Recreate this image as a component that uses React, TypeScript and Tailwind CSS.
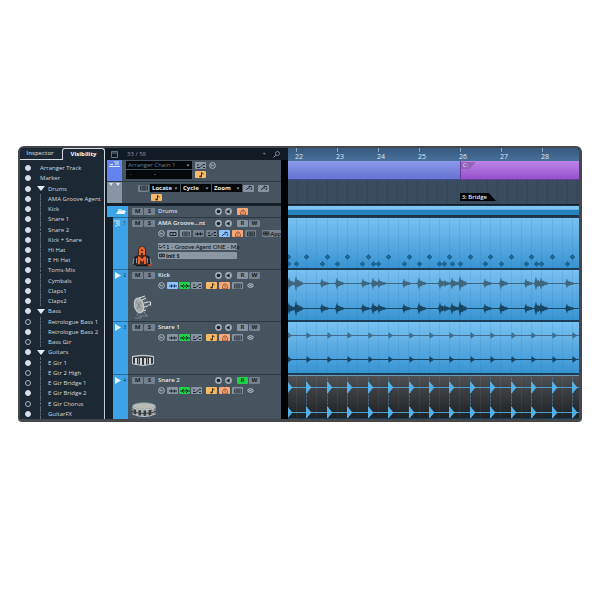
import React, { useState } from "react";

type GlyphName = "wave" | "arrows" | "note" | "drum" | "lanes" | "mix" | "link" | "pencil";

interface TreeItem {
  name: string;
  level: number;
  on: boolean;
  folder?: boolean;
}

const TREE: TreeItem[] = [
  { name: "Arranger Track", level: 0, on: true },
  { name: "Marker", level: 0, on: true },
  { name: "Drums", level: 0, on: true, folder: true },
  { name: "AMA Groove Agent", level: 1, on: true },
  { name: "Kick", level: 1, on: true },
  { name: "Snare 1", level: 1, on: true },
  { name: "Snare 2", level: 1, on: true },
  { name: "Kick + Snare", level: 1, on: true },
  { name: "Hi Hat", level: 1, on: true },
  { name: "E Hi Hat", level: 1, on: true },
  { name: "Toms-Mix", level: 1, on: true },
  { name: "Cymbals", level: 1, on: true },
  { name: "Claps1", level: 1, on: true },
  { name: "Claps2", level: 1, on: true },
  { name: "Bass", level: 0, on: true, folder: true },
  { name: "Retrologue Bass 1", level: 1, on: false },
  { name: "Retrologue Bass 2", level: 1, on: true },
  { name: "Bass Gtr", level: 1, on: false },
  { name: "Guitars", level: 0, on: true, folder: true },
  { name: "E Gtr 1", level: 1, on: true },
  { name: "E Gtr 2 High", level: 1, on: false },
  { name: "E Gtr Bridge 1", level: 1, on: false },
  { name: "E Gtr Bridge 2", level: 1, on: true },
  { name: "E Gtr Chorus", level: 1, on: false },
  { name: "GuitarFX", level: 1, on: true },
];

const BARS = [22, 23, 24, 25, 26, 27, 28];

const BEATS = [8, 18, 28, 39, 49, 59, 69, 80, 90, 100, 110, 120, 131, 141, 151, 161, 171, 182, 192, 202, 212, 223, 233, 243, 253, 264, 274, 284];

const SNARE_HITS = [0, 19, 40, 60, 81, 101, 122, 142, 162, 183, 203, 224, 244, 265, 285];
const SNARE_NOTES = [0, 18, 39, 59, 80, 100, 121, 141, 161, 182, 202, 223, 243, 264, 284];
const KICK_NOTES = [0, 8, 34, 49, 74, 85, 90, 116, 131, 151, 156, 164, 172, 197, 213, 238, 248, 253, 279];

// [x, peak]
const KICK_HITS = [
  [1, 6], [8, 8], [34, 5], [49, 6], [75, 5], [85, 6], [91, 5], [116, 5], [131, 6], [152, 6],
  [157, 4], [164, 6], [172, 8], [197, 5], [213, 6], [238, 5], [248, 7], [253, 6], [279, 5],
];

// [offset, share of the peak]
const KICK_SHAPE = [[-2, 0], [-1, 0.45], [0, 1], [1, 0.4], [2, 0.5], [4, 0.25], [5, 0.28], [8, 0]];

function Glyph({ name, small = false }: { name: GlyphName; small?: boolean }) {
  return (
    <svg
      viewBox="0 0 10 6"
      className={`shrink-0 ${small ? "h-[5px] w-[8px]" : "h-[6px] w-[10px]"}`}
      fill="none"
      stroke="currentColor"
      strokeWidth="1"
    >
      {name === "wave" && <path d="M1 3h2M7 3h2M3.5 1.5v3M5 2v2M6.5 1.5v3" />}
      {name === "arrows" && <path d="M0 3h10M4 1 2 3l2 2M6 1l2 2-2 2" />}
      {name === "note" && (
        <>
          <path d="M5.5 4.5V.5l2 1.5" />
          <ellipse cx="4.5" cy="4.5" rx="1.3" ry="1" fill="currentColor" stroke="none" />
        </>
      )}
      {name === "drum" && <path d="M2 5.3h6M2.5 5V3.500L4 1h2l1.500 2.500V5M4 3h2" strokeWidth=".8" />}
      {name === "lanes" && <path d="M1.5 1h7v4h-7zM4 1v4M6 1v4M1.5 3h7" strokeWidth=".7" />}
      {name === "mix" && <path d="M1 4.5h3l3-3h2M1 2h2M7 4.5h2" />}
      {name === "link" && <path d="M2 1.5h6v3H2zM4 3h2" />}
      {name === "pencil" && <path d="M2 5 4 3M5 4V1l3 1M7 5l1-2" />}
    </svg>
  );
}

const TONES = {
  gray: "bg-[#8793a0] text-[#1c2630]",
  dim: "bg-[#75818d] text-[#141d26]",
  green: "bg-[#1fd04a] text-[#073d16]",
  blue: "bg-[#8fc2fb] text-[#1c3a66]",
  orange: "bg-[#f6b968] text-[#47300c]",
  salmon: "bg-[#f6a878] text-[#8a4a2a]",
};

interface KeyProps {
  label: string;
  tone?: keyof typeof TONES;
  children: React.ReactNode;
}

function Key({ label, tone = "gray", children }: KeyProps) {
  return (
    <button
      type="button"
      aria-label={label}
      className={`flex h-[7px] w-[11px] shrink-0 items-center justify-center overflow-hidden rounded-[1px] text-[6px] leading-[7px] font-bold ${TONES[tone]}`}
    >
      {children}
    </button>
  );
}

function Knob({ label, kind }: { label: string; kind: "rec" | "mon" | "edit" }) {
  return (
    <button type="button" aria-label={label} className="shrink-0">
      <svg viewBox="0 0 7 7" className="size-[7px]">
        {kind === "edit" ? (
          <g fill="none" stroke="#c3ccd4" strokeWidth=".8">
            <circle cx="3.5" cy="3.5" r="2.9" />
            <path d="M2.2 2.2v1.6h2.2l1-1.2" />
          </g>
        ) : (
          <>
            <circle cx="3.5" cy="3.5" r="3.4" fill="#a3adb7" />
            {kind === "rec" ? (
              <circle cx="3.5" cy="3.5" r="1.8" fill="#18212a" />
            ) : (
              <path d="M1.6 2.8h1.2L4.6 1.2v4.6L2.8 4.4H1.6z" fill="#18212a" />
            )}
          </>
        )}
      </svg>
    </button>
  );
}

interface ComboProps {
  label: string;
  value: string;
  className: string;
}

function Combo({ label, value, className }: ComboProps) {
  return (
    <span className={`flex h-[8px] items-center bg-[#05080b] pr-[2px] ${className}`}>
      <select aria-label={label} className="h-[8px] min-w-0 flex-1 appearance-none bg-transparent pl-[2px] leading-[8px] outline-none">
        <option>{value}</option>
      </select>
      <svg viewBox="0 0 4 3" className="h-[3px] w-[4px] shrink-0">
        <path d="M.5 .5h3L2 2.5z" fill="#9aa5af" />
      </svg>
    </span>
  );
}

function Tree() {
  const [items, setItems] = useState(TREE);

  const toggle = (index: number) => {
    setItems(items.map((item, i) => (i === index ? { ...item, on: !item.on } : item)));
  };

  return (
    <aside className="flex w-[85px] shrink-0 flex-col bg-[#1c2934]">
      <div role="tablist" className="flex h-[12px] text-[6px] leading-[11px] font-semibold">
        <button type="button" role="tab" aria-selected="false" className="w-[42px] border-b border-[#d5dbe2] pr-[2px] pb-[1px] text-[#b9c3cd]">
          Inspector
        </button>
        <button type="button" role="tab" aria-selected="true" className="flex-1 rounded-t-[3px] border-t border-r border-l border-[#d5dbe2] font-bold text-white">
          Visibility
        </button>
      </div>
      <ul className="flex flex-1 flex-col border-r border-[#c3ccd6] pt-[3px]">
        {items.map((item, i) => (
          <li key={item.name} className="flex flex-1">
            <label className="flex flex-1 items-center pl-[5px]">
              <input
                type="checkbox"
                checked={item.on}
                onChange={() => toggle(i)}
                className="mr-[9px] size-[6px] shrink-0 appearance-none rounded-full border border-[#aab5c1] checked:border-[#d7deea] checked:bg-[#d7deea]"
              />
              {item.folder && (
                <svg viewBox="0 0 8 5" className="-ml-[3px] mr-[3px] h-[5px] w-[8px]">
                  <path d="M0 0h8L4 5z" fill="#e6ecf2" />
                </svg>
              )}
              {item.level === 1 && <span className="mr-[7px] self-stretch border-l border-dashed border-[#5d6a76]" />}
              <span className="text-[6px] leading-[8px] whitespace-nowrap text-[#d0d8df]">{item.name}</span>
            </label>
          </li>
        ))}
      </ul>
    </aside>
  );
}

function RobotPicture() {
  return (
    <svg viewBox="0 0 20 22" className="h-[22px] w-[20px]">
      <path d="M3 20v-7l3-2M17 20v-7l-3-2" stroke="#1b1f24" strokeWidth="2.500" fill="none" />
      <path d="M1 19l1-6M19 19l-1-6M4.500 13v5M15.500 13v5" stroke="#a9b0b6" strokeWidth=".7" />
      <path d="M6 4q4-6 8 0l1 16H5z" fill="#4a2a20" />
      <path d="M7 10V4q3-4.500 6 0v6h-2V8H9v2zM9 4.500V6h2V4.500z" fill="#f0622a" fillRule="evenodd" />
      <path d="M6 19v-7.500h1.500L10 14l2.500-2.500H14V19h-2v-4l-2 2-2-2v4z" fill="#f0622a" />
      <path d="M4 20.500h12" stroke="#15191d" strokeWidth="1.500" />
      <path d="M16 20h4" stroke="#e8432a" strokeWidth="1.4" />
    </svg>
  );
}

function KickPicture() {
  return (
    <svg viewBox="0 0 20 24" className="h-[24px] w-[20px]">
      <path d="M5 3l8-2q4 3 3 9l-3 8-6 1z" fill="#596066" />
      <path d="M7 3l6-2M10 5l4-2M12 8l4-1M12 12l4-1M11 16l3-1" stroke="#dadddf" strokeWidth="1" />
      <ellipse cx="7" cy="10.500" rx="4.500" ry="7.500" fill="#a6abae" stroke="#c6cacc" strokeWidth="1.2" transform="rotate(-12 7 10.500)" />
      <path d="M4 6l5 8M5 14l4-7" stroke="#7d8589" strokeWidth="1" />
      <path d="M6 18l-1 3M12 17l3 4M7 21h9M3 23h7" stroke="#87919a" strokeWidth=".8" />
      <path d="M16 7h2.500v3H16" stroke="#cfd4d8" strokeWidth="1.2" fill="none" />
    </svg>
  );
}

function SnarePicture({ wide = false }: { wide?: boolean }) {
  return wide ? (
    <svg viewBox="0 0 24 15" className="h-[15px] w-[24px]">
      <path d="M0 4v7q12 6 24 0V4z" fill="#7b7f80" />
      <path d="M3 8v5M8 8v6M13 8v6M18 8v6" stroke="#23282b" strokeWidth="1.500" />
      <path d="M5 7v6M10 8v6M15 8v6M21 7v5" stroke="#d7d9da" strokeWidth="1" />
      <path d="M0 9.500q12 4 24 0" stroke="#383d40" strokeWidth="1" fill="none" />
      <ellipse cx="12" cy="4" rx="11.500" ry="3.300" fill="#b9bbb9" stroke="#8d9191" strokeWidth=".7" />
      <path d="M.5 5.500q11.500 5 23 0M.5 12q11.500 5 23 0" stroke="#c9cccd" strokeWidth="1" fill="none" />
    </svg>
  ) : (
    <svg viewBox="0 0 22 12" className="h-[12px] w-[22px]">
      <path d="M1 2q10-2 20 0v8q-10 3-20 0z" fill="#33383c" />
      <path d="M4 4v6M9 4v7M13 4v7M18 4v6" stroke="#e4e6e7" strokeWidth="1.800" />
      <path d="M6.500 4v6M15.500 4v6" stroke="#8d9397" strokeWidth="1" />
      <path d="M1 2.500q10-2 20 0" stroke="#b9bdc0" strokeWidth="1.500" fill="none" />
      <path d="M1 10q10 3 20 0" stroke="#c9cdcf" strokeWidth="1" fill="none" />
      <path d="M.500 2v8M21.500 2v8" stroke="#c9cdcf" strokeWidth="1" />
    </svg>
  );
}

interface TrackProps {
  name: string;
  num: number;
  height: string;
  picture: React.ReactNode;
  armed?: boolean;
  children: React.ReactNode;
}

function Track({ name, num, height, picture, armed, children }: TrackProps) {
  return (
    <li className={`flex pl-[6px] ${height}`}>
      <div className="flex w-[15px] shrink-0 items-start justify-between border-t border-[#2b6c9c] bg-[#3da3e8] pt-[2px] pr-[2px] pl-[1px]">
        <svg viewBox="0 0 7 7" className="size-[7px]">
          {num === 1 ? (
            <path d="M0 1h6M2 3h4M3 5h3M1 6h2" stroke="#d9effc" strokeWidth="1" />
          ) : (
            <path d="M1 0 7 3.5 1 7z" fill="#e3f3fd" />
          )}
        </svg>
        <span className="text-[5px] leading-[7px] text-[#123a59]">{num}</span>
      </div>
      <div className="flex min-w-0 flex-1 border-t border-[#2c3843] bg-[#46545f] pt-[2px]">
        <div className="flex w-[30px] shrink-0 flex-col pl-[4px]">
          <div className="flex gap-[1px]">
            <Key label={`Mute ${name}`} tone="dim">M</Key>
            <Key label={`Solo ${name}`} tone="dim">S</Key>
          </div>
          <div className="flex flex-1 items-end pb-[2px]">{picture}</div>
        </div>
        <div className="flex min-w-0 flex-1 flex-col gap-[3px]">
          <div className="flex items-center">
            <span className="w-[57px] text-[6px] leading-[7px] font-semibold whitespace-nowrap text-[#e4eaef]">{name}</span>
            <span className="flex w-[22px] gap-[3px]">
              <Knob label={`Record ${name}`} kind="rec" />
              <Knob label={`Monitor ${name}`} kind="mon" />
            </span>
            <span className="flex gap-[1px]">
              <Key label={`Read ${name}`} tone={armed ? "green" : "gray"}>R</Key>
              <Key label={`Write ${name}`} tone="dim">W</Key>
            </span>
          </div>
          {children}
        </div>
      </div>
    </li>
  );
}

function AudioControls({ first = "gray" }: { first?: keyof typeof TONES }) {
  return (
    <div className="flex gap-[4px]">
      <span className="flex w-[44px] gap-[1px]">
        <span className="w-[8px]">
          <Knob label="Edit channel" kind="edit" />
        </span>
        <Key label="Inserts" tone={first}><Glyph name="wave" /></Key>
        <Key label="Equalizer" tone="green"><Glyph name="arrows" /></Key>
        <Key label="Sends"><Glyph name="mix" /></Key>
      </span>
      <span className="flex gap-[2px]">
        <Key label="Musical mode" tone="orange"><Glyph name="note" /></Key>
        <Key label="Lock" tone="salmon"><Glyph name="drum" /></Key>
        <Key label="Lanes"><Glyph name="lanes" /></Key>
      </span>
      <svg viewBox="0 0 7 7" className="size-[7px]">
        <ellipse cx="3.5" cy="3.5" rx="2.7" ry="1.8" fill="none" stroke="#c3ccd4" />
        <path d="M2.5 3.5h2" stroke="#c3ccd4" />
      </svg>
    </div>
  );
}

function TrackList() {
  return (
    <section className="flex w-[183px] shrink-0 flex-col bg-[#111b24] pl-[2px]">
      <header className="flex h-[12px] items-center pr-[8px] pl-[4px] text-[6px] leading-[8px] text-[#8996a2]">
        <svg viewBox="0 0 7 7" className="mr-[9px] size-[7px]">
          <path d="M.5 .5h6v6h-6zM.5 2h6" fill="none" stroke="#637482" />
        </svg>
        <span className="flex-1">33 / 58</span>
        <button type="button" aria-label="Add track" className="mr-[7px]">+</button>
        <button type="button" aria-label="Find track">
          <svg viewBox="0 0 7 7" className="size-[7px]">
            <path d="M3 4 .5 6.500" stroke="#8996a2" />
            <circle cx="4.500" cy="2.500" r="2" fill="none" stroke="#8996a2" strokeWidth=".8" />
          </svg>
        </button>
      </header>

      <div className="flex flex-1 bg-black pr-[7px]">
        <div className="flex min-w-0 flex-1 flex-col bg-[#15202a] text-[6px]">
          <div className="flex h-[21px] bg-[#46545f]">
            <div className="w-[15px] bg-[#6583ee] pt-[1px] pl-[2px]">
              <svg viewBox="0 0 11 6" className="h-[6px] w-[11px]">
                <path d="M0 5.500h11M1 3.500h3M5 1h5M6 3h4" stroke="#dce4ff" strokeWidth="1" />
              </svg>
            </div>
            <div className="flex flex-1 gap-[3px] pt-[1px] pl-[4px]">
              <div className="flex w-[66px] flex-col gap-[1px] text-[#707c86]">
                <Combo label="Arranger chain" value="Arranger Chain 1" className="w-full" />
                <div className="flex h-[9px] bg-[#05080b] pl-[4px] leading-[8px]">
                  <span className="w-[24px]">-</span>
                  <span className="text-[#cdd4da]">-</span>
                </div>
              </div>
              <div className="flex flex-col gap-[2px] pt-[1px]">
                <div className="flex gap-[3px]">
                  <Key label="Arranger mode"><Glyph name="mix" /></Key>
                  <Knob label="Edit arranger" kind="edit" />
                </div>
                <Key label="Time base" tone="orange"><Glyph name="note" /></Key>
              </div>
            </div>
          </div>

          <div className="flex h-[22px] border-t border-[#2c3843] bg-[#46545f]">
            <div className="w-[15px] bg-[#8796a5] pt-[1px] pl-[2px]">
              <svg viewBox="0 0 11 5" className="h-[5px] w-[11px]">
                <path d="M0 0h4L2 3zM7 0h4L9 3z" fill="#dfe6ec" />
              </svg>
            </div>
            <div className="flex flex-1 flex-col gap-[2px] pt-[2px] pl-[16px]">
              <div className="flex items-center gap-[1px] font-bold text-[#e4eaef]">
                <Key label="Add marker" tone="dim"><Glyph name="lanes" /></Key>
                <Combo label="Locate" value="Locate" className="w-[30px]" />
                <Combo label="Cycle" value="Cycle" className="w-[30px]" />
                <Combo label="Zoom" value="Zoom" className="w-[30px]" />
                <span className="flex gap-[4px]">
                  <Key label="Marker in"><Glyph name="pencil" /></Key>
                  <Key label="Marker out"><Glyph name="pencil" /></Key>
                </span>
              </div>
              <div className="pl-[13px]">
                <Key label="Marker time base" tone="orange"><Glyph name="note" /></Key>
              </div>
            </div>
          </div>

          <ul className="mt-[3px] flex flex-col">
            <li className="flex h-[11px]">
              <div className="flex w-[21px] shrink-0 justify-end bg-[#3da3e8] pt-[2px] pr-[2px]">
                <svg viewBox="0 0 10 7" className="h-[7px] w-[10px]">
                  <path d="M2 1h3l1 1h3v4H2z" fill="#a9daf8" />
                  <path d="M0 6l2-3h8L8 6z" fill="#eef8fe" />
                </svg>
              </div>
              <div className="flex flex-1 items-center bg-[#46545f] pl-[4px]">
                <span className="flex w-[26px] gap-[1px]">
                  <Key label="Mute Drums" tone="dim">M</Key>
                  <Key label="Solo Drums" tone="dim">S</Key>
                </span>
                <span className="w-[57px] leading-[7px] font-semibold text-[#bcdcf3]">Drums</span>
                <span className="flex w-[22px] gap-[3px]">
                  <Knob label="Record Drums" kind="rec" />
                  <Knob label="Monitor Drums" kind="mon" />
                </span>
                <Key label="Group editing" tone="salmon"><Glyph name="drum" /></Key>
              </div>
            </li>

            <Track name="AMA Groove...nt" num={1} height="h-[52px]" picture={<RobotPicture />}>
              <div className="flex gap-[2px]">
                <span className="w-[7px]">
                  <Knob label="Edit instrument" kind="edit" />
                </span>
                <Key label="Instrument"><Glyph name="link" /></Key>
                <Key label="Inserts"><Glyph name="lanes" /></Key>
                <Key label="Equalizer" tone="dim"><Glyph name="wave" /></Key>
                <Key label="Sends" tone="dim"><Glyph name="mix" /></Key>
                <Key label="Time base" tone="blue"><Glyph name="pencil" /></Key>
                <Key label="Lock" tone="salmon"><Glyph name="drum" /></Key>
                <Key label="Lanes" tone="dim"><Glyph name="lanes" /></Key>
                <button
                  type="button"
                  className="ml-auto flex h-[7px] items-center rounded-l-[1px] bg-[#75818d] font-['Lato','Open_Sans',sans-serif] leading-[7px] whitespace-nowrap text-[#050a0f]"
                >
                  <Glyph name="lanes" small />
                  App
                </button>
              </div>
              <div className="flex w-[79px] flex-col gap-[2px] font-['Lato','Open_Sans',sans-serif] text-[#05090d]">
                <button type="button" className="flex h-[7px] items-center rounded-[1px] bg-[#8b97a3] leading-[7px] whitespace-nowrap">
                  <Glyph name="mix" small />
                  <span>1 - Groove Agent ONE - Ma</span>
                </button>
                <button type="button" className="flex h-[7px] items-center rounded-[1px] bg-[#8b97a3] leading-[7px] font-bold">
                  <Glyph name="link" small />
                  <span>Init 1</span>
                </button>
              </div>
            </Track>
            <Track name="Kick" num={2} height="h-[52px]" picture={<KickPicture />}>
              <AudioControls first="blue" />
            </Track>
            <Track name="Snare 1" num={3} height="h-[53px]" picture={<span className="pb-[6px]"><SnarePicture /></span>}>
              <AudioControls />
            </Track>
            <Track name="Snare 2" num={4} height="h-[45px]" picture={<SnarePicture wide />} armed>
              <AudioControls />
            </Track>
          </ul>
        </div>
      </div>
    </section>
  );
}

function Beats({ color }: { color: string }) {
  return (
    <g stroke={color} strokeWidth="1">
      {BEATS.map((x) => (
        <path key={x} d={`M${x + 0.5} 0v60`} />
      ))}
    </g>
  );
}

interface LaneProps {
  height: string;
  view: number;
  dark?: boolean;
  children: React.ReactNode;
}

function Lane({ height, view, dark, children }: LaneProps) {
  return (
    <div
      className={`border-y border-[#1d3c57] ${height} ${dark ? "bg-linear-to-b from-[#505254] to-[#1d2225]" : "bg-linear-to-b from-[#78c1f1] to-[#3794d2]"}`}
    >
      <svg viewBox={`0 0 291 ${view}`} preserveAspectRatio="none" className="block h-full w-full">
        <Beats color={dark ? "#ffffff0c" : "#1b6aa222"} />
        {children}
      </svg>
    </div>
  );
}

function KickWave({ y, fill }: { y: number; fill: string }) {
  const outline = (x: number, peak: number) => {
    const upper = KICK_SHAPE.map(([dx, f]) => `${x + dx},${y - f * peak}`);
    const lower = KICK_SHAPE.map(([dx, f]) => `${x + dx},${y + f * peak}`).reverse();
    return [...upper, ...lower].join(" ");
  };

  return (
    <g fill={fill}>
      <path d={`M0 ${y}h291`} stroke={fill} />
      {KICK_HITS.map(([x, peak]) => (
        <polygon key={x} points={outline(x, peak)} />
      ))}
    </g>
  );
}

function Timeline() {
  return (
    <section className="flex min-w-0 flex-1 flex-col overflow-hidden bg-[#1b2733]">
      <div className="-mr-[4px] grid h-[13px] grid-cols-7 bg-linear-to-b from-[#375a80] to-[#47709b] pl-[8px] text-[7px] text-[#dbe7f2]">
        {BARS.map((bar) => (
          <div key={bar} className="flex flex-col">
            <span className="h-[4px] w-px bg-[#8fa9c4]" />
            <span className="-ml-[1px] leading-[9px]">{bar}</span>
          </div>
        ))}
      </div>

      <div className="flex h-[19px]">
        <div className="w-[59%] border-b border-[#3e4a94] bg-linear-to-b from-[#8b99ea] to-[#6573d3]" />
        <div className="flex-1 border-b border-l border-[#6d3a98] bg-linear-to-b from-[#bd83ea] to-[#9550cb]">
          <div className="mt-[1px] flex h-[7px] w-[15px] bg-[#9166b5] pl-[2px] text-[6px] leading-[7px] text-[#ecdcf8] [clip-path:polygon(0_0,100%_0,60%_100%,0_100%)]">
            C:
          </div>
        </div>
      </div>

      <div className="flex h-[25px] items-start border-b border-[#121b24] bg-[#3a4c60] bg-[repeating-linear-gradient(90deg,transparent_0_9px,#00000018_9px_10px)] pt-[13px] pl-[59%]">
        <div className="h-[8px] bg-black pr-[9px] pl-[2px] text-[6px] leading-[8px] font-semibold whitespace-nowrap text-[#e8ecef] [clip-path:polygon(0_0,80%_0,100%_100%,0_100%)]">
          3: Bridge
        </div>
      </div>

      <div className="h-[12px] border-t border-b-2 border-[#1d3548] bg-linear-to-b from-[#7cc4f0] from-35% to-[#2482bd] to-50%" />

      <Lane height="h-[52px]" view={50}>
        <g fill="#1e6898" stroke="#1e6898" strokeLinejoin="round">
          {SNARE_NOTES.map((x) => (
            <path key={x} d={`M${x + 0.5} 36.500l2.500 2.500-2.500 2.500-2.500-2.500z`} />
          ))}
          {KICK_NOTES.map((x) => (
            <path key={x} d={`M${x + 0.5} 43.500l2.500 2.500-2.500 2.500-2.500-2.500z`} />
          ))}
        </g>
      </Lane>

      <Lane height="h-[52px]" view={50}>
        <KickWave y={13.5} fill="#3f667f" />
        <KickWave y={38.5} fill="#174664" />
      </Lane>

      <Lane height="h-[53px]" view={51}>
        {[13.5, 37.5].map((y) => (
          <g key={y} fill={y < 20 ? "#3f6c8b" : "#174664"}>
            <path d={`M0 ${y}h291`} stroke={y < 20 ? "#3f6c8b" : "#174664"} />
            {SNARE_HITS.map((x) => (
              <path key={x} d={`M${x - 1} ${y}l1-3.500 1 1.500 2 1 1 1-1 1-2 1-1 1.500z`} />
            ))}
          </g>
        ))}
      </Lane>

      <Lane height="h-[45px]" view={43} dark>
        <path d="M0 .5h291" stroke="#6f9ab8" />
        <g stroke="#3f7ea8" strokeWidth=".8" strokeDasharray="2 1.500">
          {SNARE_HITS.map((x) => (
            <path key={x} d={`M${x - 0.5} 3v40`} />
          ))}
        </g>
        {[12.5, 37.5].map((y) => (
          <g key={y} fill="#55afe8">
            <path d={`M0 ${y}h291`} stroke="#4d9bcd" />
            {SNARE_HITS.map((x) => (
              <path key={x} d={`M${x - 1} ${y - 6}l1.500 1 .5 1 1 1 1.500 2 1.500 1-1.500 1-1.500 2-1 1-.5 1-1.500 1z`} />
            ))}
          </g>
        ))}
      </Lane>
    </section>
  );
}

export default function App() {
  return (
    <div className="min-h-screen bg-white px-[18px] pt-[146px] font-['Open_Sans','Noto_Sans',sans-serif]">
      <main className="flex overflow-hidden rounded-t-[6px] rounded-b-[4px] border-t-2 border-r-[3px] border-b-[3px] border-l-2 border-[#45474a] bg-black">
        <Tree />
        <TrackList />
        <Timeline />
      </main>
    </div>
  );
}
